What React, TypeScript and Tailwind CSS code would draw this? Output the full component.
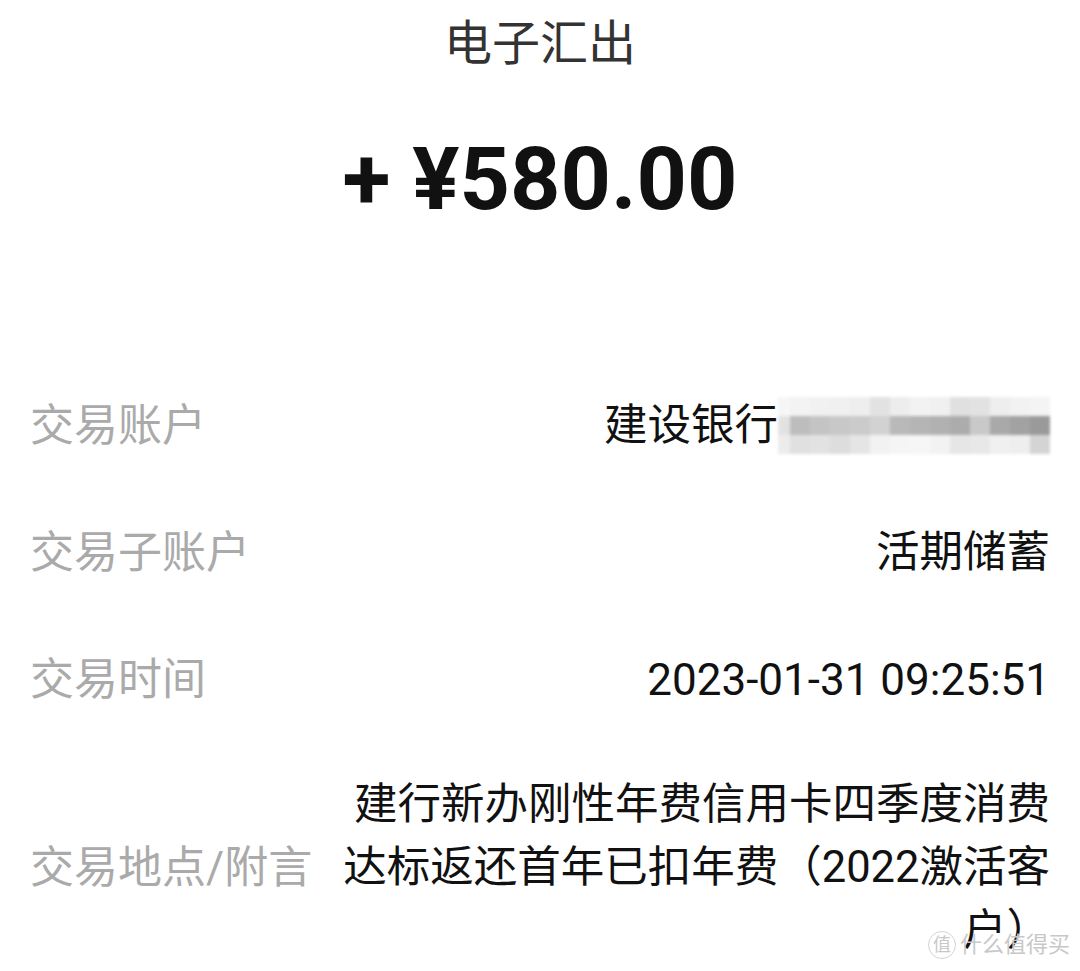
import React from "react";

const cjk = "font-['Roboto','Noto_Sans_CJK_SC',sans-serif]";

// mosaic colours for the hidden card number, 3 rows x 14 cols
const mosaic: string[][] = [
  ["#f6f6f6", "#f3f3f3", "#f1f1f1", "#f0f0f0", "#eeeeee", "#e2e2e2", "#ededed", "#f2f2f2", "#f0f0f0", "#e0e0e0", "#e2e2e2", "#eeeeee", "#f2f2f2", "#f4f4f4"],
  ["#e2e2e2", "#bdbdbd", "#c4c4c4", "#c8c8c8", "#cbcbcb", "#d2d2d2", "#b9b9b9", "#b5b5b5", "#b1b1b1", "#acacac", "#c9c9c9", "#a9a9a9", "#a2a2a2", "#9a9a9a"],
  ["#ececec", "#e0e0e0", "#e2e2e2", "#dddddd", "#e5e5e5", "#f2f2f2", "#f5f5f5", "#f6f6f6", "#f2f2f2", "#e6e6e6", "#e8e8e8", "#f0f0f0", "#eeeeee", "#d4d4d4"],
];

const Row = ({ label, children, tall }: { label: string; children: React.ReactNode; tall?: boolean }) => (
  <div className={`flex items-center justify-between ${tall ? "pt-[30px]" : "h-[127px]"}`}>
    <span className="text-[44px] text-[#aaaaaa] whitespace-nowrap">{label}</span>
    {children}
  </div>
);

export default function App() {
  return (
    <div className={`relative w-[1080px] h-[971px] overflow-hidden bg-white ${cjk}`}>
      <div className="h-[88px] flex items-center justify-center text-[48px] text-[#333333]">电子汇出</div>

      <div className="h-[182px] flex items-center justify-center text-[88px] font-bold text-[#111111] leading-none">
        + ¥580.00
      </div>

      <div className="mt-[92px] px-[30px]">
        <Row label="交易账户">
          <div className="flex items-center text-[43.5px] text-[#111111]">
            <span>建设银行</span>
            <div className="blur-[1.5px]">
              <div className="grid grid-cols-[12px_repeat(13,20px)] grid-rows-[repeat(3,19px)]">
                {mosaic.flatMap((row, r) =>
                  row.map((c, i) => <div key={`${r}-${i}`} style={{ backgroundColor: c }} />)
                )}
              </div>
            </div>
          </div>
        </Row>

        <Row label="交易子账户">
          <span className="text-[43.5px] text-[#111111]">活期储蓄</span>
        </Row>

        <Row label="交易时间">
          <span className="text-[44px] text-[#111111]">2023-01-31 09:25:51</span>
        </Row>

        <Row label="交易地点/附言" tall>
          <div className="w-[712px] text-right text-[43.5px] leading-[63px] text-[#111111]">
            建行新办刚性年费信用卡四季度消费达标返还首年已扣年费（2022激活客户）
          </div>
        </Row>
      </div>

      <div className="absolute right-[10px] bottom-[10px] flex items-center gap-[4px] text-[22px] text-[#c8c8c8]">
        <span className="w-[28px] h-[28px] rounded-full border border-[#d4d4d4] flex items-center justify-center text-[18px]">值</span>
        <span>什么值得买</span>
      </div>
    </div>
  );
}
